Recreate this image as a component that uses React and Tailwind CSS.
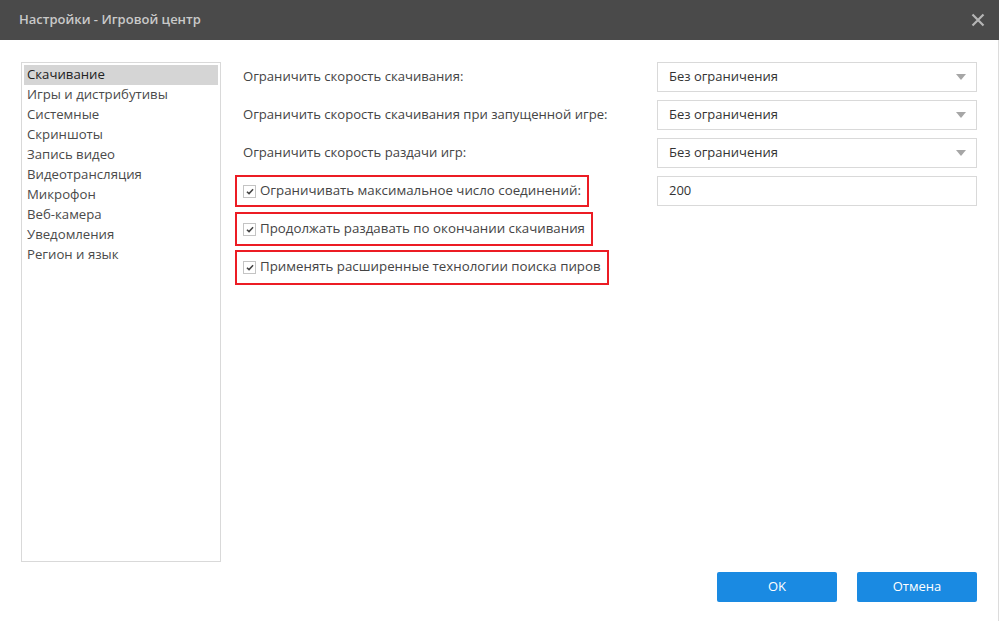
import React from 'react';

const font = { fontFamily: '"Open Sans", "Noto Sans", sans-serif' };

const menu = [
  'Скачивание',
  'Игры и дистрибутивы',
  'Системные',
  'Скриншоты',
  'Запись видео',
  'Видеотрансляция',
  'Микрофон',
  'Веб-камера',
  'Уведомления',
  'Регион и язык',
];

const Select = ({ value }) => (
  <div className="w-[320px] h-[30px] border border-[#d9d9d9] bg-white flex items-center justify-between pl-[11px] pr-[10px] text-[13px] text-[#333]">
    <span>{value}</span>
    <svg width="10" height="6" viewBox="0 0 10 6">
      <path d="M0 0 H10 L5 6 Z" fill="#a6a6a6" />
    </svg>
  </div>
);

const Check = () => (
  <span className="w-[13px] h-[13px] border border-[#c4c4c4] bg-white flex items-center justify-center shrink-0">
    <svg width="8" height="7" viewBox="0 0 9 8">
      <path d="M1 4.2 L3.4 6.4 L8 1.4" stroke="#444" strokeWidth="1.7" fill="none" />
    </svg>
  </span>
);

const Marked = ({ children, h }) => (
  <div className={`-ml-[8px] ${h} border-2 border-[#ec1c24] flex items-center gap-[4px] pl-[6px] pr-[6px] text-[13.3px] text-[#444]`}>
    <Check />
    <span>{children}</span>
  </div>
);

const Row = ({ children, control }) => (
  <div className="h-[30px] flex items-center justify-between">
    {children}
    {control}
  </div>
);

export default function App() {
  return (
    <div className="w-[999px] h-[621px] bg-white flex flex-col overflow-hidden" style={font}>
      <div className="h-[40px] bg-[#4a4a4a] flex items-center justify-between pl-[19px] pr-[14px] shrink-0">
        <span className="text-[13px] font-semibold text-[#c9c9c9]">Настройки - Игровой центр</span>
        <svg width="14" height="14" viewBox="0 0 14 14">
          <path d="M1.5 1.5 L12.5 12.5 M12.5 1.5 L1.5 12.5" stroke="#b5b5b5" strokeWidth="2.2" />
        </svg>
      </div>

      <div className="flex-1 border-r border-[#dcdcdc] pt-[22px] pl-[21px] pr-[21px] flex flex-col">
        <div className="flex gap-[22px]">
          <div className="w-[200px] h-[500px] border border-[#d9d9d9] p-[2px] shrink-0">
            {menu.map((m, i) => (
              <div
                key={m}
                className={`h-[20px] pl-[3px] flex items-center text-[13.2px] leading-none ${i === 0 ? 'bg-[#d5d5d5] text-[#222]' : 'text-[#4a4a4a]'}`}
              >
                {m}
              </div>
            ))}
          </div>

          <div className="flex-1 flex flex-col gap-[8px] text-[13.1px] text-[#444]">
            <Row control={<Select value="Без ограничения" />}>
              <span>Ограничить скорость скачивания:</span>
            </Row>
            <Row control={<Select value="Без ограничения" />}>
              <span>Ограничить скорость скачивания при запущенной игре:</span>
            </Row>
            <Row control={<Select value="Без ограничения" />}>
              <span>Ограничить скорость раздачи игр:</span>
            </Row>
            <Row
              control={
                <div className="w-[320px] h-[30px] border border-[#d9d9d9] flex items-center pl-[11px] text-[13px] text-[#333]">
                  200
                </div>
              }
            >
              <Marked h="h-[32px]">Ограничивать максимальное число соединений:</Marked>
            </Row>
            <Row>
              <Marked h="h-[34px]">Продолжать раздавать по окончании скачивания</Marked>
            </Row>
            <Row>
              <Marked h="h-[35px]">Применять расширенные технологии поиска пиров</Marked>
            </Row>
          </div>
        </div>

        <div className="mt-[10px] flex justify-end gap-[20px]">
          <button className="w-[120px] h-[30px] bg-[#1a8ae2] rounded-[2px] text-white text-[13px]">OK</button>
          <button className="w-[120px] h-[30px] bg-[#1a8ae2] rounded-[2px] text-white text-[13px]">Отмена</button>
        </div>
      </div>
    </div>
  );
}
